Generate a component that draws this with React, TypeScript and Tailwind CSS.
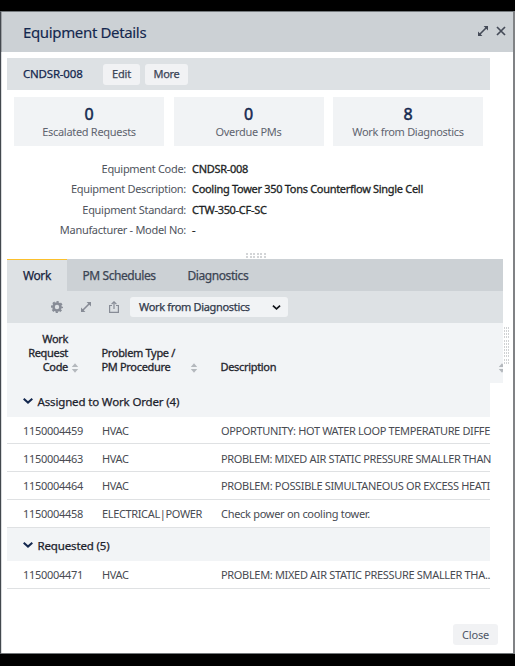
import React from "react";

const stats = [
  { value: "0", label: "Escalated Requests" },
  { value: "0", label: "Overdue PMs" },
  { value: "8", label: "Work from Diagnostics" },
];

const fields = [
  { label: "Equipment Code:", value: "CNDSR-008" },
  { label: "Equipment Description:", value: "Cooling Tower 350 Tons Counterflow Single Cell" },
  { label: "Equipment Standard:", value: "CTW-350-CF-SC" },
  { label: "Manufacturer - Model No:", value: "-" },
];

const assigned = [
  ["1150004459", "HVAC", "OPPORTUNITY: HOT WATER LOOP TEMPERATURE DIFFE"],
  ["1150004463", "HVAC", "PROBLEM: MIXED AIR STATIC PRESSURE SMALLER THAN"],
  ["1150004464", "HVAC", "PROBLEM: POSSIBLE SIMULTANEOUS OR EXCESS HEATI"],
  ["1150004458", "ELECTRICAL|POWER", "Check power on cooling tower."],
];

const requested = [["1150004471", "HVAC", "PROBLEM: MIXED AIR STATIC PRESSURE SMALLER THA.."]];

const rowStyles = [
  { height: "h-[27px] pt-[2px]", tracking: "tracking-[-0.35px]" },
  { height: "h-[28px] pt-[3px]", tracking: "tracking-[-0.37px]" },
  { height: "h-[28px] pt-[1px]", tracking: "tracking-[-0.34px]" },
  { height: "h-[28px] pt-[1px]", tracking: "tracking-[-0.29px]" },
];

const medium = "[-webkit-text-stroke:0.25px_currentColor]";

function Expand({ className }: { className: string }) {
  return (
    <svg viewBox="0 0 10 10" className={className} fill="currentColor">
      <path d="M5.6 0H10V4.4zM4.4 10H0V5.6z" />
      <path d="M1.5 8.5 8.5 1.5" stroke="currentColor" strokeWidth="1.6" />
    </svg>
  );
}

function Chevron({ className }: { className: string }) {
  return (
    <svg viewBox="0 0 10 6" className={className} fill="none" stroke="currentColor" strokeWidth="2">
      <path d="M0.7 0.8 5 4.6 9.3 0.8" />
    </svg>
  );
}

function Sort() {
  return (
    <svg viewBox="0 0 8 10" className="h-[10px] w-[8px] shrink-0 fill-[#b4b8bd]">
      <path d="M4 0.3 7.2 4H0.8zM4 9.7 0.8 6H7.2z" />
    </svg>
  );
}

function Group({ title, className }: { title: string; className: string }) {
  return (
    <div className={`flex w-[483px] items-center bg-[#f2f4f6] pl-4 ${className}`}>
      <Chevron className="mr-[4.5px] -mt-[3px] h-[6px] w-[10px] text-[#14284f]" />
      <span className={`text-[11.5px] tracking-[-0.15px] text-[#1c222c] ${medium}`}>{title}</span>
    </div>
  );
}

function Row({ cells, height, tracking }: { cells: string[]; height: string; tracking: string }) {
  return (
    <div className={`flex w-[483px] items-center border-b border-[#dfe1e3] pl-4 text-[11px] text-[#484b52] ${height}`}>
      <div className="w-[79px] shrink-0 tracking-[-0.28px]">{cells[0]}</div>
      <div className="w-[119px] shrink-0 tracking-[-0.36px]">{cells[1]}</div>
      <div className={`shrink-0 ${tracking}`}>{cells[2]}</div>
    </div>
  );
}

export default function App() {
  return (
    <div className="h-[666px] w-[515px] overflow-hidden bg-black pt-[11px] font-['Noto_Sans',sans-serif] whitespace-nowrap">
      <div className="flex h-[643px] flex-col border-y border-r-2 border-l border-t-[#74797d] border-r-[#808285] border-b-[#73777a] border-l-[#43484e] bg-white">
        <header className="flex h-10 shrink-0 items-center border-l border-[#9da1a5] bg-[#ccd1d5] pl-[21px] pr-[7px] text-[#14284f]">
          <h1 className="flex-1 text-[15px] tracking-[-0.35px] [-webkit-text-stroke:0.15px_currentColor]">Equipment Details</h1>
          <Expand className="mb-[3px] h-[10px] w-[10px] text-[#454b58]" />
          <svg viewBox="0 0 10 10" className="mb-[3px] ml-2 h-[10px] w-[10px]" fill="none" stroke="#454b58" strokeWidth="1.7">
            <path d="M1 1 9 9M9 1 1 9" />
          </svg>
        </header>

        <div className="flex flex-1 flex-col border-l border-[#d9dbdd] pl-[5px]">
          <div className="mt-[6px] flex h-8 w-[483px] items-center bg-[#dde1e4] pl-4">
            <span className={`w-[80px] text-[11.5px] tracking-[-0.2px] text-[#14284f] ${medium}`}>CNDSR-008</span>
            <button className={`h-[21px] w-[37px] rounded-[3px] bg-[#f1f2f4] text-[11px] tracking-[-0.2px] text-[#3c4557] ${medium}`}>Edit</button>
            <button className={`ml-[5px] h-[21px] w-[43px] rounded-[3px] bg-[#f1f2f4] text-[11px] tracking-[-0.3px] text-[#3c4557] ${medium}`}>More</button>
          </div>

          <div className="mt-[7px] ml-[7px] flex w-[469px] justify-between">
            {stats.map((s) => (
              <div key={s.label} className="flex h-[49px] w-[150px] flex-col items-center bg-[#f1f3f5] pt-[7px]">
                <span className="text-[16px] leading-[20px] text-[#14284f] [-webkit-text-stroke:0.5px_currentColor]">{s.value}</span>
                <span className="text-[11px] leading-[16px] tracking-[-0.3px] text-[#5f646f]">{s.label}</span>
              </div>
            ))}
          </div>

          <div className="mt-[13px] flex h-[94px] flex-col">
            {fields.map((f) => (
              <div key={f.label} className="flex h-[20.4px] items-center text-[11px] tracking-[-0.3px]">
                <span className="w-[179px] text-right text-[#50545d]">{f.label}</span>
                <span className="ml-[6px] text-[#1d1f24] [-webkit-text-stroke:0.3px_currentColor]">{f.value}</span>
              </div>
            ))}
          </div>
          <div className="ml-[239px] grid h-[6px] w-[20px] grid-cols-6 content-start gap-x-[1.4px] gap-y-px">
            {Array.from({ length: 12 }, (_, i) => (
              <i key={i} className="h-[2px] w-[2px] bg-[#d3d5d7]" />
            ))}
          </div>

          <div className={`flex h-8 w-[496px] bg-[#ccd1d5] text-[12px] tracking-[-0.42px] text-[#3b4453] ${medium}`}>
            <div className="flex w-[60px] items-center border-t border-t-[#fbc02d] bg-[#dde1e4] pl-4 pt-px text-[#17233d]">Work</div>
            <div className="flex w-[105px] items-center pl-[15.5px] pt-[2px]">PM Schedules</div>
            <div className="flex items-center pl-[15.5px] pt-[2px]">Diagnostics</div>
          </div>

          <div className="flex h-8 w-[496px] items-center bg-[#dde1e4] pl-[43.5px] text-[#878c96]">
            <svg viewBox="0 0 12 12" className="h-3 w-3" fill="none" stroke="currentColor">
              <circle cx="6" cy="6" r="3.5" strokeWidth="2.6" />
              <circle cx="6" cy="6" r="5.1" strokeWidth="1.8" strokeDasharray="2.2 1.805" strokeDashoffset="1.1" />
            </svg>
            <Expand className="ml-[18px] h-[10px] w-[10px]" />
            <svg viewBox="0 0 10 12" className="ml-[18.5px] h-3 w-[10px]" fill="none" stroke="currentColor" strokeWidth="1.2">
              <path d="M3 4.5H0.6V11.4H9.4V4.5H7M5 8V1M2.6 3.2 5 0.8 7.4 3.2" />
            </svg>
            <div className={`ml-[11px] flex h-5 w-[158px] items-center justify-between rounded-[3px] bg-[#f1f3f5] pl-[9px] pr-[7px] text-[11px] tracking-[-0.33px] text-[#30394a] ${medium}`}>
              Work from Diagnostics
              <Chevron className="h-[5px] w-[9px] text-[#101318]" />
            </div>
          </div>

          <div className="flex w-[502px]">
            <div className="flex h-[60px] w-[496px] items-end overflow-hidden bg-[#f2f4f6] pb-[9px] text-[11px] leading-[14px] tracking-[-0.32px] text-[#1f242d] [-webkit-text-stroke:0.3px_currentColor]">
              <div className="w-[61px] shrink-0 text-right">Work<br />Request<br />Code</div>
              <div className="mb-px ml-[3px] shrink-0"><Sort /></div>
              <div className="ml-[22.5px] w-[88px] shrink-0">Problem Type /<br />PM Procedure</div>
              <div className="mb-px shrink-0"><Sort /></div>
              <div className="ml-[23px] w-[277.5px] shrink-0">Description</div>
              <div className="mb-px shrink-0"><Sort /></div>
            </div>
            <div className="mt-1 ml-px grid h-[38px] w-[5px] grid-cols-3 gap-x-px">
              {Array.from({ length: 36 }, (_, i) => (
                <i key={i} className="h-[2px] w-px bg-[#d0d2d4]" />
              ))}
            </div>
          </div>

          <Group title="Assigned to Work Order (4)" className="h-[34px] pt-[4px]" />
          {assigned.map((r, i) => (
            <Row key={r[0]} cells={r} height={rowStyles[i].height} tracking={rowStyles[i].tracking} />
          ))}
          <Group title="Requested (5)" className="h-[33px] pt-[3px]" />
          {requested.map((r) => (
            <Row key={r[0]} cells={r} height="h-[28px] pt-[2px]" tracking="tracking-[-0.33px]" />
          ))}

          <button className="mt-[35px] ml-[446px] h-[21px] w-[45px] shrink-0 rounded-[3px] bg-[#f1f2f4] pt-px text-[11px] tracking-[-0.2px] text-[#4e5666]">Close</button>
        </div>
      </div>
    </div>
  );
}
